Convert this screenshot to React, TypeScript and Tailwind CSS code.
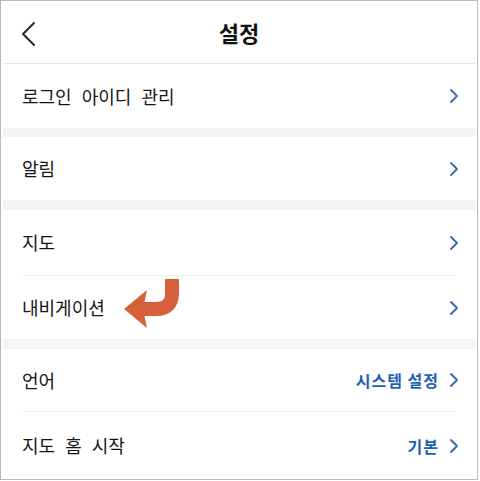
import React from 'react';

const FONT = '"Noto Sans CJK KR", "Noto Sans", sans-serif';

const Chevron = () => (
  <svg width="10" height="16" viewBox="0 0 10 16" className="shrink-0">
    <polyline points="2,2 8,8 2,14" fill="none" stroke="#3768a6" strokeWidth="1.8" strokeLinecap="round" strokeLinejoin="round" />
  </svg>
);

const BackIcon = () => (
  <svg width="16" height="26" viewBox="0 0 16 26">
    <polyline points="13,2 2,13 13,24" fill="none" stroke="#2b2b2b" strokeWidth="2" strokeLinecap="round" strokeLinejoin="round" />
  </svg>
);

// orange annotation arrow over the navigation row
const CurvedArrow = () => (
  <svg width="60" height="52" viewBox="0 0 60 52" className="absolute left-[119px] top-[2px]">
    <path d="M50 1 L50 15 Q50 31 34 31 L20 31" fill="none" stroke="#d5603a" strokeWidth="14" />
    <polygon points="2,31 25,12 21,31 25,50" fill="#d5603a" />
  </svg>
);

interface RowProps {
  label: string;
  value?: string;
  h?: string;
  children?: React.ReactNode;
}

const Row: React.FC<RowProps> = ({ label, value, h = 'h-16', children }) => (
  <div className={`relative flex items-center justify-between pl-[19px] pr-[16px] ${h}`}>
    <span className="text-[18px] text-[#151515] [word-spacing:6px]">{label}</span>
    <div className="flex items-center gap-[10px]">
      {value && <span className="text-[16px] font-bold tracking-[1px] text-[#1d61b3]">{value}</span>}
      <Chevron />
    </div>
    {children}
  </div>
);

const Divider = () => <div className="mx-5 h-px bg-[#eeeeee]" />;
const Gap = ({ h }: { h: string }) => <div className={`${h} bg-[#f2f4f7]`} />;

export default function App() {
  return (
    <div className="w-[480px] h-[481px] bg-white overflow-hidden" style={{ fontFamily: FONT }}>
      <div className="w-[478px] h-[480px] border border-[#b9b9b9] px-[2px] overflow-hidden">
        <div className="relative h-[63px] flex items-center justify-center border-b border-[#e6e6e6]">
          <div className="absolute left-[18px] top-[20px]">
            <BackIcon />
          </div>
          <span className="text-[22px] font-bold text-[#111111]">설정</span>
        </div>
        <Row label="로그인 아이디 관리" />
        <Gap h="h-[9px]" />
        <Row label="알림" h="h-[63px]" />
        <Gap h="h-[10px]" />
        <Row label="지도" h="h-[65px]" />
        <Divider />
        <Row label="내비게이션" h="h-[63px]">
          <CurvedArrow />
        </Row>
        <Gap h="h-[10px]" />
        <Row label="언어" value="시스템 설정" h="h-[62px]" />
        <Divider />
        <Row label="지도 홈 시작" value="기본" h="h-[67px]" />
      </div>
    </div>
  );
}
